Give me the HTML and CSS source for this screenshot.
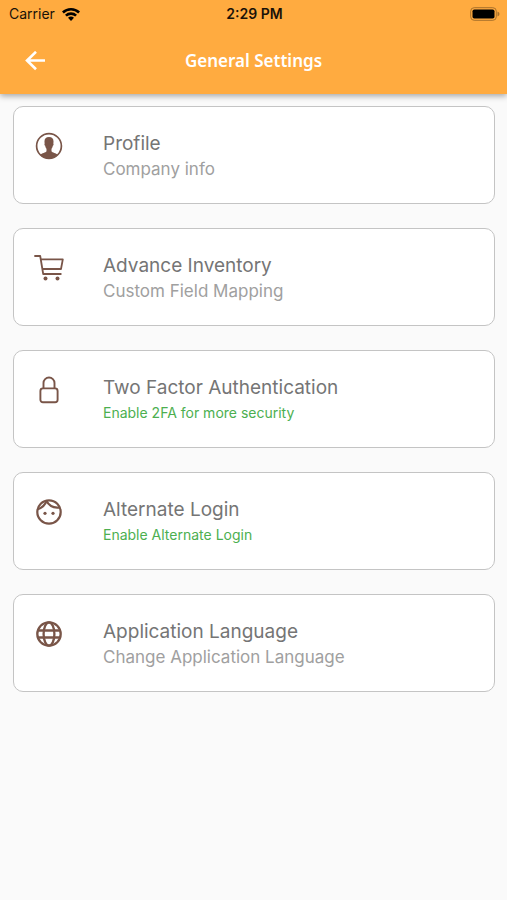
FILE: index.html
```html
<!DOCTYPE html>
<html lang="en">
	<head>
		<meta charset="UTF-8">
		<meta name="viewport" content="width=device-width,initial-scale=1">
		<title>General Settings</title>
		<link rel="stylesheet" href="styles.css">
	</head>
	<body>

		<header class="header">
			<!-- status bar -->
			<div class="status">
				<div class="carrier">
					<span>Carrier</span>
					<svg width="18" height="14" viewBox="0 0 18 14">
						<path d="M0 4.600a13 13 0 0 1 18 0l-1.800 1.900a10.400 10.400 0 0 0-14.400 0z"/>
						<path d="M3 7.700a8.700 8.700 0 0 1 12 0l-1.800 1.900a6 6 0 0 0-8.400 0z"/>
						<path d="M6 10.800a4.400 4.400 0 0 1 6 0l-3 3.200z"/>
					</svg>
				</div>
				<span class="time">2:29 PM</span>
				<div class="battery">
					<svg width="30" height="14" viewBox="0 0 30 14">
						<rect x="0.700" y="0.700" width="25.600" height="12.600" rx="3.500" fill="none" stroke="#a8712b"/>
						<rect x="2.500" y="2.500" width="22" height="9" rx="1.800"/>
						<path d="M27.500 4.500q2 .8 2 2.500t-2 2.500z" fill="#a8712b"/>
					</svg>
				</div>
			</div>
			<!-- title bar -->
			<div class="bar">
				<button class="back" type="button" aria-label="Back">
					<svg width="20" height="20" viewBox="0 0 20 20" fill="none" stroke="#fff" stroke-width="2.600">
						<path d="M20 9.500H2M11 .8L2 9.500l9 8.700"/>
					</svg>
				</button>
				<h1 class="title">General Settings</h1>
			</div>
		</header>

		<main class="list">
			<a class="card" href="#profile">
				<svg class="icon" viewBox="0 0 30 30">
					<circle cx="15" cy="15" r="12.400" fill="none" stroke="#795548" stroke-width="1.700"/>
					<path fill="#795548" d="M15 6c-3.300 0-4.700 2-4.500 5 0 .6.100 1 .2 1.400-.5.300-.3 2 .5 2.400.2 1.500.7 2.300 1.300 3v2.400c-.8 1.600-4.700 1.700-6.300 3.700a12.400 12.400 0 0 0 17.600 0c-1.600-2-5.500-2.100-6.300-3.700v-2.400c.6-.7 1.100-1.500 1.300-3 .8-.4 1-2.100.5-2.400.1-.4.2-.8.200-1.400.2-3-1.200-5-4.500-5z"/>
				</svg>
				<span class="text">
					<span class="name">Profile</span>
					<span class="info">Company info</span>
				</span>
			</a>

			<a class="card" href="#inventory">
				<svg class="icon" viewBox="0 0 30 30" fill="none" stroke="#795548" stroke-width="1.800" stroke-linecap="round" stroke-linejoin="round">
					<path d="M1 3h5.200l3 18h17.600M6.700 6.300h22.100l-1.800 9.700H8.500"/>
					<circle cx="11.500" cy="25.500" r="2" fill="#795548" stroke="none"/>
					<circle cx="23.500" cy="25.500" r="2" fill="#795548" stroke="none"/>
				</svg>
				<span class="text">
					<span class="name">Advance Inventory</span>
					<span class="info">Custom Field Mapping</span>
				</span>
			</a>

			<a class="card" href="#two-factor">
				<svg class="icon" viewBox="0 0 30 30" fill="none" stroke="#795548" stroke-width="1.900">
					<rect x="6.400" y="13.400" width="17.200" height="13.800" rx="2.500"/>
					<path d="M9.500 13.400V8a5.500 5.500 0 0 1 11 0v5.400"/>
				</svg>
				<span class="text">
					<span class="name">Two Factor Authentication</span>
					<span class="info green">Enable 2FA for more security</span>
				</span>
			</a>

			<a class="card" href="#login">
				<svg class="icon" viewBox="0 0 30 30" fill="none" stroke="#795548" stroke-width="2.200">
					<circle cx="15" cy="15" r="11.700"/>
					<path d="M12.200 3.600c2.600 5 7.800 7.800 14 6.800M3.800 12.200c4.300-1.500 7.300-4.300 8.700-8.400"/>
					<circle cx="11" cy="16.300" r="1.600" fill="#795548" stroke="none"/>
					<circle cx="19" cy="16.300" r="1.600" fill="#795548" stroke="none"/>
				</svg>
				<span class="text">
					<span class="name">Alternate Login</span>
					<span class="info green">Enable Alternate Login</span>
				</span>
			</a>

			<a class="card" href="#language">
				<svg class="icon" viewBox="0 0 30 30" fill="none" stroke="#795548" stroke-width="2.300">
					<circle cx="15" cy="15" r="11.700"/>
					<ellipse cx="15" cy="15" rx="5.400" ry="11.700"/>
					<path d="M4.500 11.500h21M4.500 18.500h21"/>
				</svg>
				<span class="text">
					<span class="name">Application Language</span>
					<span class="info">Change Application Language</span>
				</span>
			</a>
		</main>

	</body>
</html>
```
FILE: styles.css
```css
*{
	margin:0;
	padding:0;
	box-sizing: border-box;
}

body{
	background: #fafafa;
	font-family: Inter, "Liberation Sans", sans-serif;
}

.header{
	background: #ffab40;
	box-shadow: 0 2px 6px rgba(0,0,0,.35);
}
.status{
	display: grid;
	grid-template-columns: 1fr auto 1fr;
	align-items: center;
	height: 27px;
	padding: 0 7px 0 9px;
	font-size: 14px;
	color: #1a1208;
}
.carrier{
	display: flex;
	align-items: center;
	gap: 7px;
}
.time{
	font-weight: 600;
}
.battery{
	display: flex;
	justify-content: flex-end;
}

.bar{
	display: grid;
	grid-template-columns: 48px 1fr 48px;
	align-items: center;
	height: 67px;
	padding: 0 11px;
}
.back{
	display: flex;
	align-items: center;
	justify-content: center;
	height: 48px;
	border: 0;
	background: none;
}
.title{
	font-family: "Noto Sans", "Open Sans", sans-serif;
	font-size: 17px;
	font-weight: 600;
	text-align: center;
	color: #fff;
}

.list{
	display: flex;
	flex-direction: column;
	gap: 24px;
	padding: 12px 12px 24px 13px;
}
.card{
	display: flex;
	align-items: flex-start;
	gap: 39px;
	padding: 24px 20px 22px;
	border: 1px solid #c4c4c4;
	border-radius: 10px;
	background: #fff;
	text-decoration: none;
}
.icon{
	flex: none;
	width: 30px;
	height: 30px;
}
.text{
	display: flex;
	flex-direction: column;
}
.name{
	font-size: 19px;
	line-height: 26px;
	color: #757575;
}
.info{
	font-size: 17px;
	line-height: 24px;
	color: #a0a0a0;
}
.green{
	font-size: 14px;
	color: #4caf50;
}
```
